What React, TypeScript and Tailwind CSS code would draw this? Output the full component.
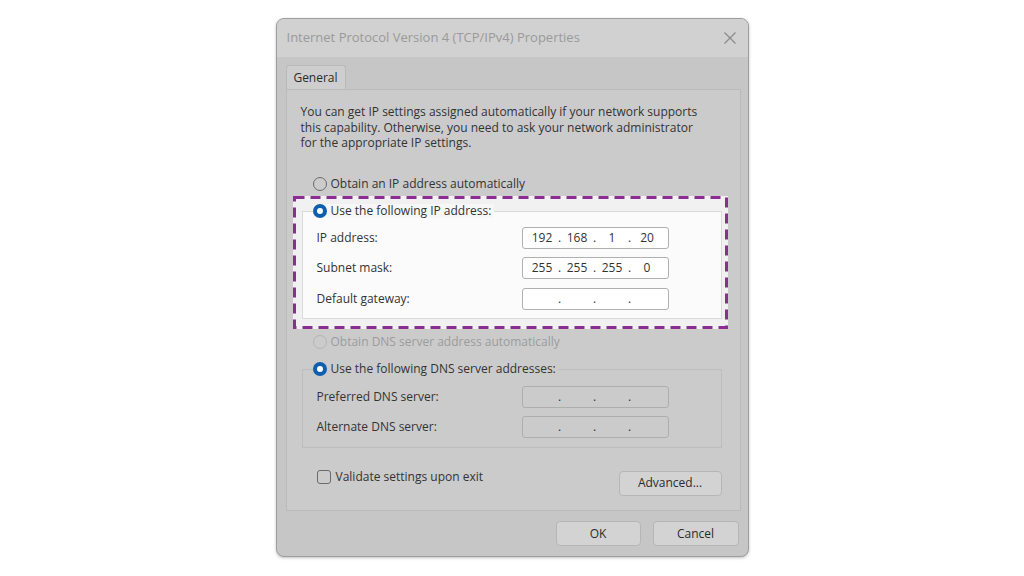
import React from "react";

type Ip = string[];

function Radio({ checked, disabled }: { checked?: boolean; disabled?: boolean }) {
  if (checked) {
    return (
      <span className="flex h-[14px] w-[14px] shrink-0 items-center justify-center rounded-full bg-[#0f5fae]">
        <span className="h-[6px] w-[6px] rounded-full bg-white" />
      </span>
    );
  }
  return (
    <span
      className={
        disabled
          ? "h-[14px] w-[14px] shrink-0 rounded-full border border-[#b4b4b4]"
          : "h-[14px] w-[14px] shrink-0 rounded-full border border-[#6a6a6a]"
      }
    />
  );
}

function IpBox({ parts, dim }: { parts: Ip; dim?: boolean }) {
  return (
    <div
      className={
        dim
          ? "flex h-[22px] w-[147px] items-center rounded-[3px] border border-[#aeaeae] bg-[#cbcbcb] pl-[4px] text-[12px] text-[#333]"
          : "flex h-[22px] w-[147px] items-center rounded-[3px] border border-[#b0b0b0] bg-white pl-[4px] text-[12px] text-[#333]"
      }
    >
      {parts.map((p, i) => (
        <React.Fragment key={i}>
          <span className="w-[31px] text-center">{p}</span>
          {i < 3 && <span className="w-[4px] text-center">.</span>}
        </React.Fragment>
      ))}
    </div>
  );
}

function Row({ label, parts, dim }: { label: string; parts: Ip; dim?: boolean }) {
  return (
    <div className="flex h-[22px] items-center justify-between">
      <span className="text-[12px] text-[#333]">{label}</span>
      <IpBox parts={parts} dim={dim} />
    </div>
  );
}

function Button({ label, w }: { label: string; w: string }) {
  return (
    <div
      className={
        "flex h-[25px] items-center justify-center rounded-[4px] border border-[#b6b6b6] bg-[#d3d3d3] text-[12px] text-[#2b2b2b] " +
        w
      }
    >
      {label}
    </div>
  );
}

export default function App() {
  const empty = ["", "", "", ""];

  return (
    <div
      className="flex h-[576px] w-[1024px] justify-center bg-white pt-[18px]"
      style={{ fontFamily: '"Open Sans", "Liberation Sans", Arial, sans-serif' }}
    >
      <div className="flex h-[539px] w-[473px] flex-col overflow-hidden rounded-[8px] border border-[#9e9e9e] bg-[#c6c6c6] shadow-[0_1px_3px_rgba(0,0,0,0.25)]">

        {/* title bar */}
        <div className="flex h-[38px] shrink-0 items-center justify-between bg-[#d1d1d1] pl-[10px] pr-[11px]">
          <span className="text-[13px] text-[#9a9a9a]">
            Internet Protocol Version 4 (TCP/IPv4) Properties
          </span>
          <svg width="14" height="14" viewBox="0 0 14 14">
            <path d="M1.5 1.5 L12.5 12.5 M12.5 1.5 L1.5 12.5" stroke="#8a8a8a" strokeWidth="1.2" />
          </svg>
        </div>

        {/* tabs */}
        <div className="flex flex-col pl-[9px] pt-[8px]">
          <div className="flex">
            <div className="flex h-[24px] w-[60px] items-center justify-center rounded-t-[3px] border border-b-0 border-[#b9b9b9] bg-[#cecece] text-[12px] text-[#2b2b2b]">
              General
            </div>
          </div>

          <div className="flex h-[422px] w-[455px] flex-col border border-[#bababa] bg-[#cbcbcb]">

            <p className="pl-[14px] pt-[14px] text-[12px] leading-[15.5px] text-[#333]">
              You can get IP settings assigned automatically if your network supports
              <br />
              this capability. Otherwise, you need to ask your network administrator
              <br />
              for the appropriate IP settings.
            </p>

            <div className="ml-[26px] mt-[26px] flex h-[14px] items-center gap-[4px]">
              <Radio />
              <span className="text-[12px] text-[#333]">Obtain an IP address automatically</span>
            </div>

            {/* highlighted section */}
            <div className="relative ml-[6px] mt-[5px] h-[133px] w-[435px] bg-[#f1f1f1] pl-[9px] pt-[15px]">
              <svg className="absolute inset-0" width="435" height="133" viewBox="0 0 435 133">
                <rect x="1.5" y="1.5" width="432" height="130" fill="none" stroke="#8d2c92" strokeWidth="3" strokeDasharray="10 6" />
              </svg>
              <div className="relative h-[108px] w-[420px] border border-[#dadada] bg-[#fbfbfb] pl-[14px] pr-[52px] pt-[15px]">
                <div className="absolute left-[10px] top-[-8px] flex h-[14px] items-center gap-[4px] bg-[#f7f7f7] pr-[3px]">
                  <Radio checked />
                  <span className="text-[12px] text-[#333]">Use the following IP address:</span>
                </div>
                <div className="flex flex-col gap-[8.5px]">
                  <Row label="IP address:" parts={["192", "168", "1", "20"]} />
                  <Row label="Subnet mask:" parts={["255", "255", "255", "0"]} />
                  <Row label="Default gateway:" parts={empty} />
                </div>
              </div>
            </div>

            <div className="ml-[26px] mt-[6px] flex h-[14px] items-center gap-[4px]">
              <Radio disabled />
              <span className="text-[12px] text-[#9c9c9c]">Obtain DNS server address automatically</span>
            </div>

            <div className="relative ml-[15px] mt-[20px] h-[79px] w-[420px] border border-[#bdbdbd] pl-[14px] pr-[52px] pt-[16px]">
              <div className="absolute left-[10px] top-[-8px] flex h-[14px] items-center gap-[4px] bg-[#cbcbcb] pr-[3px]">
                <Radio checked />
                <span className="text-[12px] text-[#333]">Use the following DNS server addresses:</span>
              </div>
              <div className="flex flex-col gap-[8px]">
                <Row label="Preferred DNS server:" parts={empty} dim />
                <Row label="Alternate DNS server:" parts={empty} dim />
              </div>
            </div>

            <div className="mt-[22px] flex items-start justify-between pl-[30px] pr-[18px]">
              <div className="flex h-[14px] items-center gap-[5px]">
                <span className="h-[14px] w-[14px] rounded-[3px] border border-[#6a6a6a]" />
                <span className="text-[12px] text-[#333]">Validate settings upon exit</span>
              </div>
              <div className="mt-[1px]">
                <Button label="Advanced..." w="w-[103px]" />
              </div>
            </div>
          </div>
        </div>

        {/* footer buttons */}
        <div className="flex justify-end gap-[12px] pr-[9px] pt-[10px]">
          <Button label="OK" w="w-[85px]" />
          <Button label="Cancel" w="w-[86px]" />
        </div>
      </div>
    </div>
  );
}
